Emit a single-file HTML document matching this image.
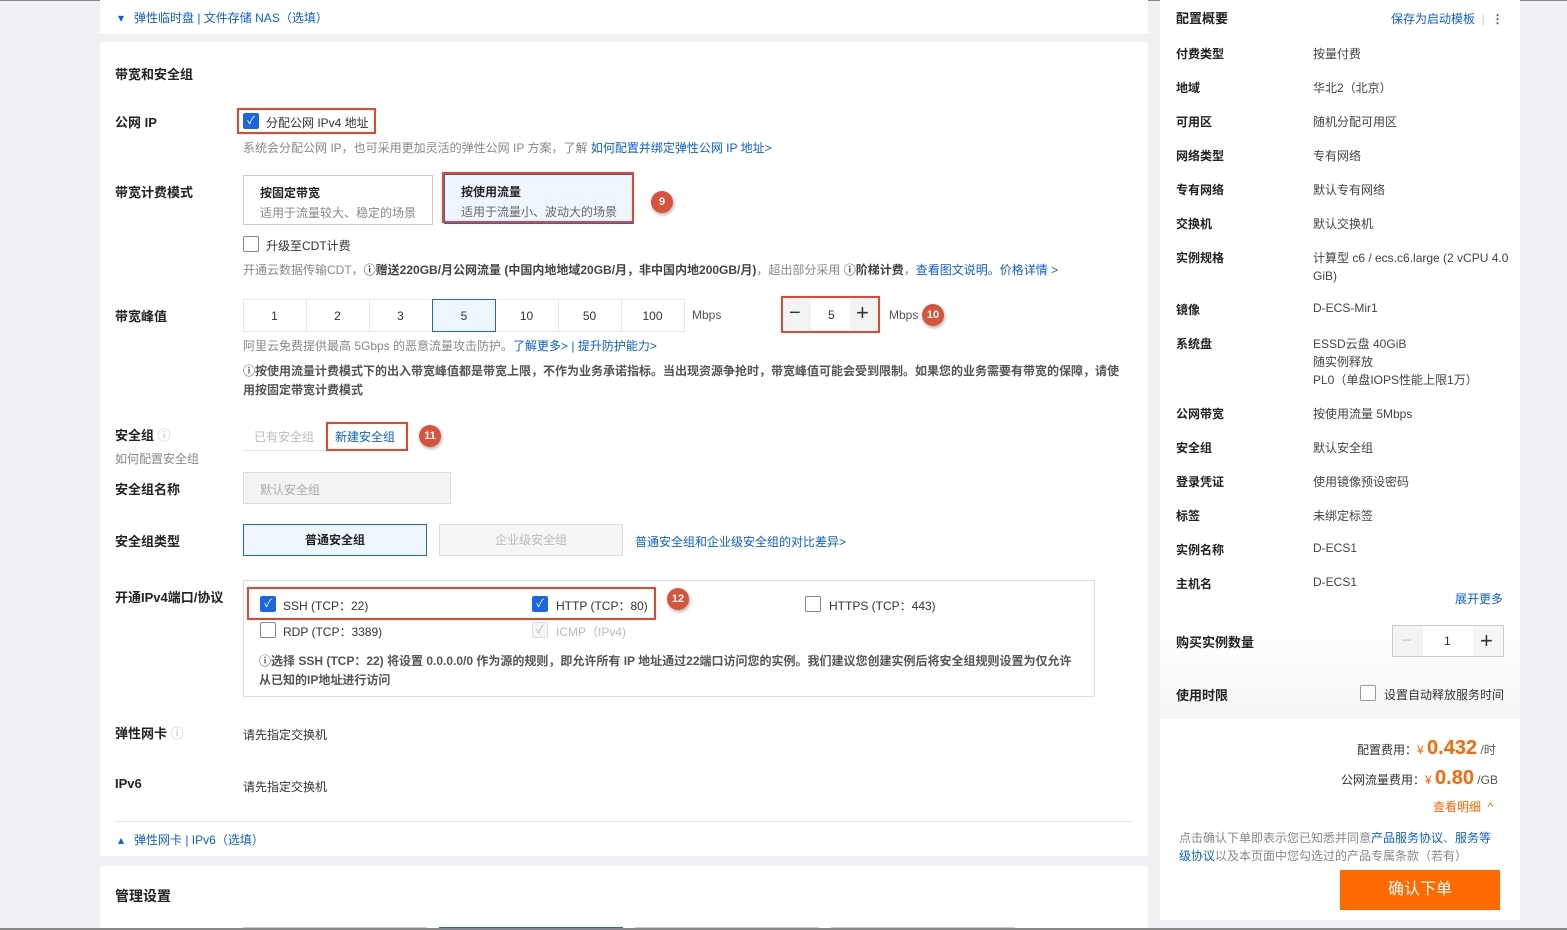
<!DOCTYPE html>
<html><head><meta charset="utf-8"><style>
*{margin:0;padding:0;box-sizing:border-box}
body{width:1567px;height:930px;overflow:hidden;background:#eef0f3;font-family:"Liberation Sans","Noto Sans CJK SC",sans-serif;font-size:12px;color:#333;position:relative}
.a{position:absolute;white-space:nowrap}
.w{position:absolute;background:#fff}
.lbl{font-size:13px;font-weight:bold;color:#222;margin-top:-2px}
.g{color:#888}
.b{color:#0b5fe0}
.red{position:absolute;border:2px solid #e8452c}
.badge{position:absolute;width:22px;height:22px;border-radius:50%;background:#d9533a;color:#fff;font-size:11px;font-weight:bold;text-align:center;line-height:22px;box-shadow:1px 2px 3px rgba(0,0,0,.3)}
.cb{position:absolute;width:16px;height:16px;border:1px solid #888;border-radius:2px;background:#fff}
.cbo{position:absolute;width:16px;height:16px;border-radius:2px;background:#1a66e6;color:#fff;font-size:11px;text-align:center;line-height:16px}
.bx{position:absolute;border:1px solid #ddd;text-align:center}
.rk{position:absolute;left:1176px;font-weight:bold;color:#222;margin-top:-1px}
.rv{position:absolute;left:1313px;color:#444;margin-top:-1px}
</style></head><body>
<div style="position:absolute;left:0;top:0;width:1567px;height:1px;background:#888"></div>
<div class="w" style="left:100px;top:0;width:1048px;height:34px"></div>
<div class="w" style="left:100px;top:42px;width:1048px;height:814px"></div>
<div class="w" style="left:100px;top:866px;width:1048px;height:64px"></div>
<div class="a b" style="left:118px;top:9px;font-size:12px">▾&nbsp;&nbsp; 弹性临时盘 | 文件存储 NAS（选填）</div>

<div class="a lbl" style="left:115px;top:66px">带宽和安全组</div>
<div class="a lbl" style="left:115px;top:114px">公网 IP</div>
<div class="red" style="left:237px;top:108px;width:139px;height:26px"></div>
<div class="cbo" style="left:243px;top:113px">✓</div>
<div class="a" style="left:266px;top:114px">分配公网 IPv4 地址</div>
<div class="a g" style="left:243px;top:139px">系统会分配公网 IP，也可采用更加灵活的弹性公网 IP 方案，了解 <span class="b">如何配置并绑定弹性公网 IP 地址&gt;</span></div>

<div class="a lbl" style="left:115px;top:184px">带宽计费模式</div>
<div class="bx" style="left:243px;top:175px;width:190px;height:50px;border-color:#ccc;text-align:left;padding:8px 0 0 16px"><div style="font-weight:bold;color:#222">按固定带宽</div><div class="g" style="margin-top:3px">适用于流量较大、稳定的场景</div></div>
<div class="bx" style="left:444px;top:174px;width:190px;height:50px;border:1px solid #1a66e6;background:#f0f6ff;text-align:left;padding:8px 0 0 16px"><div style="font-weight:bold;color:#222">按使用流量</div><div style="margin-top:3px;color:#666">适用于流量小、波动大的场景</div></div>
<div class="red" style="left:442px;top:172px;width:192px;height:51px"></div>
<div class="badge" style="left:651px;top:191px">9</div>
<div class="cb" style="left:243px;top:236px"></div>
<div class="a" style="left:266px;top:237px">升级至CDT计费</div>
<div class="a g" style="left:243px;top:261px">开通云数据传输CDT，<b style="color:#444">ⓘ赠送220GB/月公网流量 (中国内地地域20GB/月，非中国内地200GB/月)</b>，超出部分采用 <b style="color:#444">ⓘ阶梯计费</b>，<span class="b">查看图文说明。价格详情 &gt;</span></div>

<div class="a lbl" style="left:115px;top:308px">带宽峰值</div>
<div class="bx" style="left:243px;top:299px;width:442px;height:33px;border-color:#e5e5e5"></div>
<div class="a" style="left:243px;top:309px;width:442px;display:flex"><span style="width:63px;text-align:center">1</span><span style="width:63px;text-align:center">2</span><span style="width:63px;text-align:center">3</span><span style="width:63px;text-align:center">5</span><span style="width:63px;text-align:center">10</span><span style="width:63px;text-align:center">50</span><span style="width:63px;text-align:center">100</span></div>
<div style="position:absolute;left:306px;top:300px;width:1px;height:31px;background:#e5e5e5"></div>
<div style="position:absolute;left:369px;top:300px;width:1px;height:31px;background:#e5e5e5"></div>
<div style="position:absolute;left:495px;top:300px;width:1px;height:31px;background:#e5e5e5"></div>
<div style="position:absolute;left:558px;top:300px;width:1px;height:31px;background:#e5e5e5"></div>
<div style="position:absolute;left:621px;top:300px;width:1px;height:31px;background:#e5e5e5"></div>
<div style="position:absolute;left:432px;top:299px;width:64px;height:33px;border:1px solid #1a66e6;background:#f0f6ff"></div>
<div class="a" style="left:432px;top:309px;width:64px;text-align:center">5</div>
<div class="a" style="left:692px;top:308px;color:#555">Mbps</div>
<div class="red" style="left:781px;top:296px;width:99px;height:37px"></div>
<div style="position:absolute;left:784px;top:299px;width:27px;height:31px;background:#f3f3f3"></div>
<div style="position:absolute;left:850px;top:299px;width:27px;height:31px;background:#f3f3f3"></div>
<div class="a" style="left:789px;top:302px;font-size:20px">−</div>
<div class="a" style="left:828px;top:308px">5</div>
<div class="a" style="left:856px;top:300px;font-size:22px">+</div>
<div class="a" style="left:889px;top:308px;color:#555">Mbps</div>
<div class="badge" style="left:922px;top:304px">10</div>
<div class="a g" style="left:243px;top:337px">阿里云免费提供最高 5Gbps 的恶意流量攻击防护。<span class="b">了解更多&gt; | 提升防护能力&gt;</span></div>
<div class="a" style="left:243px;top:362px;color:#555;font-weight:bold;white-space:normal;width:885px;line-height:19px">ⓘ按使用流量计费模式下的出入带宽峰值都是带宽上限，不作为业务承诺指标。当出现资源争抢时，带宽峰值可能会受到限制。如果您的业务需要有带宽的保障，请使用按固定带宽计费模式</div>

<div class="a lbl" style="left:115px;top:427px">安全组 <span style="color:#bbb;font-weight:normal">ⓘ</span></div>
<div class="a g" style="left:115px;top:450px">如何配置安全组</div>
<div style="position:absolute;left:243px;top:450px;width:85px;height:1px;background:#e5e5e5"></div>
<div class="a" style="left:254px;top:428px;color:#bbb">已有安全组</div>
<div class="red" style="left:326px;top:422px;width:82px;height:29px"></div>
<div class="a b" style="left:335px;top:428px">新建安全组</div>
<div class="badge" style="left:419px;top:425px">11</div>
<div class="a lbl" style="left:115px;top:481px">安全组名称</div>
<div class="bx" style="left:243px;top:472px;width:208px;height:32px;background:#f3f3f3;border-color:#ddd;text-align:left;padding:8px 16px;color:#aaa">默认安全组</div>
<div class="a lbl" style="left:115px;top:533px">安全组类型</div>
<div class="bx" style="left:243px;top:524px;width:184px;height:32px;border-color:#1a66e6;background:#f0f6ff;line-height:30px;font-weight:bold;color:#222">普通安全组</div>
<div class="bx" style="left:439px;top:524px;width:184px;height:32px;background:#f6f6f6;line-height:30px;color:#bbb">企业级安全组</div>
<div class="a b" style="left:635px;top:533px">普通安全组和企业级安全组的对比差异&gt;</div>

<div class="a lbl" style="left:115px;top:589px">开通IPv4端口/协议</div>
<div class="bx" style="left:243px;top:580px;width:852px;height:117px;border-color:#ddd"></div>
<div class="red" style="left:247px;top:587px;width:409px;height:33px"></div>
<div class="cbo" style="left:260px;top:596px">✓</div><div class="a" style="left:283px;top:597px">SSH (TCP：22)</div>
<div class="cbo" style="left:532px;top:596px">✓</div><div class="a" style="left:556px;top:597px">HTTP (TCP：80)</div>
<div class="badge" style="left:667px;top:588px">12</div>
<div class="cb" style="left:805px;top:596px"></div><div class="a" style="left:829px;top:597px">HTTPS (TCP：443)</div>
<div class="cb" style="left:260px;top:622px"></div><div class="a" style="left:283px;top:623px">RDP (TCP：3389)</div>
<div class="cb" style="left:532px;top:622px;border-color:#ddd;background:#f5f5f5;color:#bbb;font-size:11px;text-align:center;line-height:14px">✓</div><div class="a" style="left:556px;top:623px;color:#bbb">ICMP（IPv4)</div>
<div class="a" style="left:259px;top:652px;color:#555;font-weight:bold;white-space:normal;width:818px;line-height:19px">ⓘ选择 SSH (TCP：22) 将设置 0.0.0.0/0 作为源的规则，即允许所有 IP 地址通过22端口访问您的实例。我们建议您创建实例后将安全组规则设置为仅允许从已知的IP地址进行访问</div>

<div class="a lbl" style="left:115px;top:725px">弹性网卡 <span style="color:#bbb;font-weight:normal">ⓘ</span></div>
<div class="a" style="left:243px;top:726px">请先指定交换机</div>
<div class="a lbl" style="left:115px;top:778px">IPv6</div>
<div class="a" style="left:243px;top:778px">请先指定交换机</div>
<div style="position:absolute;left:115px;top:821px;width:1017px;height:1px;background:#e5e5e5"></div>
<div class="a b" style="left:118px;top:831px">▴&nbsp;&nbsp; 弹性网卡 | IPv6（选填）</div>
<div class="a lbl" style="left:115px;top:888px;font-size:14px">管理设置</div>
<div style="position:absolute;left:243px;top:927px;width:184px;height:3px;border:1px solid #ccc;border-bottom:0"></div>
<div style="position:absolute;left:439px;top:927px;width:184px;height:3px;border:1px solid #1a66e6;border-bottom:0"></div>
<div style="position:absolute;left:635px;top:927px;width:184px;height:3px;border:1px solid #ccc;border-bottom:0"></div>
<div style="position:absolute;left:831px;top:927px;width:184px;height:3px;border:1px solid #ccc;border-bottom:0"></div>

<!-- right panel -->
<div class="w" style="left:1160px;top:0;width:360px;height:920px"></div>
<div class="a lbl" style="left:1176px;top:10px">配置概要</div>
<div class="a b" style="left:1391px;top:10px">保存为启动模板 <span style="color:#ccc">&nbsp;|&nbsp;</span> <b>⋮</b></div>
<div class="rk" style="top:46px">付费类型</div><div class="rv" style="top:46px">按量付费</div>
<div class="rk" style="top:80px">地域</div><div class="rv" style="top:80px">华北2（北京）</div>
<div class="rk" style="top:114px">可用区</div><div class="rv" style="top:114px">随机分配可用区</div>
<div class="rk" style="top:148px">网络类型</div><div class="rv" style="top:148px">专有网络</div>
<div class="rk" style="top:182px">专有网络</div><div class="rv" style="top:182px">默认专有网络</div>
<div class="rk" style="top:216px">交换机</div><div class="rv" style="top:216px">默认交换机</div>
<div class="rk" style="top:250px">实例规格</div><div class="rv" style="top:250px;line-height:18px">计算型 c6 / ecs.c6.large (2 vCPU 4.0<br>GiB)</div>
<div class="rk" style="top:302px">镜像</div><div class="rv" style="top:302px">D-ECS-Mir1</div>
<div class="rk" style="top:336px">系统盘</div><div class="rv" style="top:336px;line-height:18px">ESSD云盘 40GiB<br>随实例释放<br>PL0（单盘IOPS性能上限1万）</div>
<div class="rk" style="top:406px">公网带宽</div><div class="rv" style="top:406px">按使用流量 5Mbps</div>
<div class="rk" style="top:440px">安全组</div><div class="rv" style="top:440px">默认安全组</div>
<div class="rk" style="top:474px">登录凭证</div><div class="rv" style="top:474px">使用镜像预设密码</div>
<div class="rk" style="top:508px">标签</div><div class="rv" style="top:508px">未绑定标签</div>
<div class="rk" style="top:542px">实例名称</div><div class="rv" style="top:542px">D-ECS1</div>
<div class="rk" style="top:576px">主机名</div><div class="rv" style="top:576px">D-ECS1</div>
<div class="a b" style="left:1455px;top:590px">展开更多</div>
<div style="position:absolute;left:1160px;top:617px;width:360px;height:102px;background:linear-gradient(#fff,#f6f6f6)"></div>
<div class="a lbl" style="left:1176px;top:634px">购买实例数量</div>
<div class="bx" style="left:1392px;top:625px;width:112px;height:32px;border-color:#ccc;background:#fff"></div>
<div style="position:absolute;left:1393px;top:626px;width:30px;height:30px;background:#f3f3f3"></div>
<div style="position:absolute;left:1473px;top:626px;width:30px;height:30px;background:#f5f5f5"></div>
<div class="a" style="left:1401px;top:630px;font-size:18px;color:#ccc">−</div>
<div class="a" style="left:1444px;top:634px">1</div>
<div class="a" style="left:1480px;top:628px;font-size:22px;color:#333">+</div>
<div class="a lbl" style="left:1176px;top:687px">使用时限</div>
<div class="cb" style="left:1360px;top:685px;border-color:#999"></div>
<div class="a" style="left:1384px;top:686px">设置自动释放服务时间</div>
<div class="a" style="left:1357px;top:737px">配置费用：<span style="color:#f60">¥ <b style="font-size:20px">0.432</b></span><span style="color:#555"> /时</span></div>
<div class="a" style="left:1341px;top:767px">公网流量费用：<span style="color:#f60">¥ <b style="font-size:20px">0.80</b></span><span style="color:#555"> /GB</span></div>
<div class="a" style="left:1433px;top:798px;color:#f60">查看明细 &nbsp;^</div>
<div class="a g" style="left:1179px;top:829px;line-height:18px">点击确认下单即表示您已知悉并同意<span class="b">产品服务协议</span>、<span class="b">服务等</span><br><span class="b">级协议</span>以及本页面中您勾选过的产品专属条款（若有）</div>
<div class="a" style="left:1340px;top:870px;width:160px;height:40px;background:#ff6a00;color:#fff;font-size:16px;text-align:center;line-height:40px">确认下单</div>
<div style="position:absolute;left:0;top:928px;width:1567px;height:2px;background:#888"></div>
</body></html>
